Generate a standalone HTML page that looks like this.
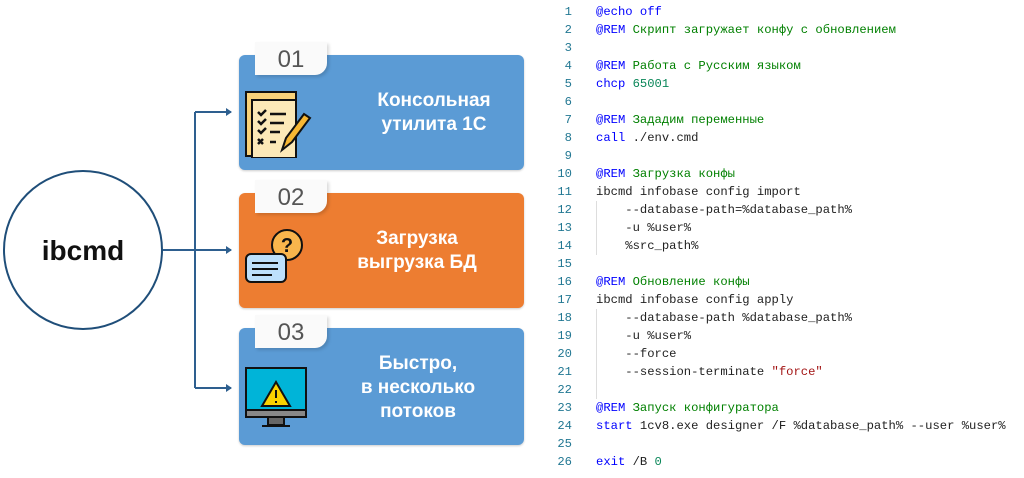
<!DOCTYPE html>
<html><head><meta charset="utf-8"><style>
body{margin:0;width:1024px;height:478px;background:#fff;position:relative;overflow:hidden;font-family:"Liberation Sans",sans-serif}
.box{position:absolute;left:239px;width:285px;border-radius:6px;box-shadow:0 1px 2px rgba(0,0,0,.2)}
.blue{background:#5b9bd5}.orange{background:#ed7d31}
.tab{position:absolute;left:255px;width:72px;height:33px;background:#fafafa;border-radius:0 0 12px 0;font-size:24px;color:#555;text-align:center;line-height:36px;box-shadow:2px 2px 3px rgba(0,0,0,.15)}
.txt{position:absolute;width:150px;text-align:center;color:#fff;font-weight:bold;font-size:19px;line-height:24px}
.code{position:absolute;left:548px;top:3px;font-family:"Liberation Mono","DejaVu Sans Mono",monospace;font-size:12.2px;line-height:18px;white-space:pre;color:#222}
.n{display:inline-block;width:24px;text-align:right;color:#237893;margin-right:24px}
.k{color:#0000ff}.c{color:#008000}.s{color:#a31515}.g{color:#098658}
.guide{position:absolute;left:596px;width:1px;background:#ddd}
</style></head><body>
<svg width="240" height="478" style="position:absolute;left:0;top:0">
<circle cx="83" cy="250" r="79" fill="#fff" stroke="#1f4e79" stroke-width="2"/>
<path d="M163 250H231M195 112V388M195 112H231M195 388H231" stroke="#2e5f8f" stroke-width="2" fill="none"/>
<path d="M226 108l6 4-6 4zM226 246l6 4-6 4zM226 384l6 4-6 4z" fill="#2e5f8f"/>
<text x="83" y="260" font-family="Liberation Sans" font-size="28" font-weight="bold" text-anchor="middle" fill="#111">ibcmd</text>
</svg>
<div class="box blue" style="top:55px;height:115px"></div>
<div class="box orange" style="top:193px;height:115px"></div>
<div class="box blue" style="top:328px;height:117px"></div>
<div class="tab" style="top:42px">01</div>
<div class="tab" style="top:180px">02</div>
<div class="tab" style="top:315px">03</div>
<div class="txt" style="left:359px;top:89px">Консольная<br>утилита 1С</div>
<div class="txt" style="left:342px;top:227px">Загрузка<br>выгрузка БД</div>
<div class="txt" style="left:343px;top:352px">Быстро,<br>в несколько<br>потоков</div>
<svg width="70" height="70" style="position:absolute;left:244px;top:88px" viewBox="0 0 70 70">
<rect x="2" y="4" width="50" height="64" fill="#f9d27a" stroke="#111" stroke-width="2"/>
<rect x="8" y="12" width="44" height="58" fill="#fce9b8" stroke="#111" stroke-width="2"/>
<path d="M14 24l3 3 5-5M14 33l3 3 5-5M14 42l3 3 5-5M14 51l5 5M19 51l-5 5M26 26h16M26 35h14M26 44h10M26 54h6" stroke="#111" stroke-width="2.5" fill="none"/>
<path d="M38 62l4-12 18-24 6 4-18 24z" fill="#f7b733" stroke="#111" stroke-width="2"/>
</svg>
<svg width="70" height="70" style="position:absolute;left:244px;top:226px" viewBox="0 0 70 70">
<circle cx="43" cy="19" r="15" fill="#f9b54c" stroke="#111" stroke-width="2"/>
<text x="43" y="26" font-size="20" font-weight="bold" text-anchor="middle" fill="#111" font-family="Liberation Sans">?</text>
<rect x="2" y="28" width="40" height="28" rx="5" fill="#bde0fb" stroke="#111" stroke-width="2"/>
<path d="M8 37h26M8 43h26M8 49h20" stroke="#111" stroke-width="2"/>
</svg>
<svg width="70" height="70" style="position:absolute;left:244px;top:362px" viewBox="0 0 70 70">
<rect x="2" y="6" width="60" height="42" fill="#00b4d8" stroke="#111" stroke-width="2"/>
<rect x="2" y="48" width="60" height="7" fill="#888" stroke="#111" stroke-width="2"/>
<path d="M24 55h16v8H24zM18 64h28" stroke="#111" stroke-width="2" fill="#666"/>
<path d="M32 20l-14 24h28z" fill="#fcd200" stroke="#111" stroke-width="2"/>
<path d="M32 28v8M32 39v2" stroke="#111" stroke-width="2"/>
</svg>
<div class="guide" style="top:201px;height:54px"></div>
<div class="guide" style="top:309px;height:90px"></div>
<div class="code"><span class="n">1</span><span class="k">@echo off</span>
<span class="n">2</span><span class="k">@REM</span> <span class="c">Скрипт загружает конфу с обновлением</span>
<span class="n">3</span>
<span class="n">4</span><span class="k">@REM</span> <span class="c">Работа с Русским языком</span>
<span class="n">5</span><span class="k">chcp</span> <span class="g">65001</span>
<span class="n">6</span>
<span class="n">7</span><span class="k">@REM</span> <span class="c">Зададим переменные</span>
<span class="n">8</span><span class="k">call</span> ./env.cmd
<span class="n">9</span>
<span class="n">10</span><span class="k">@REM</span> <span class="c">Загрузка конфы</span>
<span class="n">11</span>ibcmd infobase config import
<span class="n">12</span>    --database-path=%database_path%
<span class="n">13</span>    -u %user%
<span class="n">14</span>    %src_path%
<span class="n">15</span>
<span class="n">16</span><span class="k">@REM</span> <span class="c">Обновление конфы</span>
<span class="n">17</span>ibcmd infobase config apply
<span class="n">18</span>    --database-path %database_path%
<span class="n">19</span>    -u %user%
<span class="n">20</span>    --force
<span class="n">21</span>    --session-terminate <span class="s">"force"</span>
<span class="n">22</span>
<span class="n">23</span><span class="k">@REM</span> <span class="c">Запуск конфигуратора</span>
<span class="n">24</span><span class="k">start</span> 1cv8.exe designer /F %database_path% --user %user%
<span class="n">25</span>
<span class="n">26</span><span class="k">exit</span> /B <span class="g">0</span></div>
</body></html>
